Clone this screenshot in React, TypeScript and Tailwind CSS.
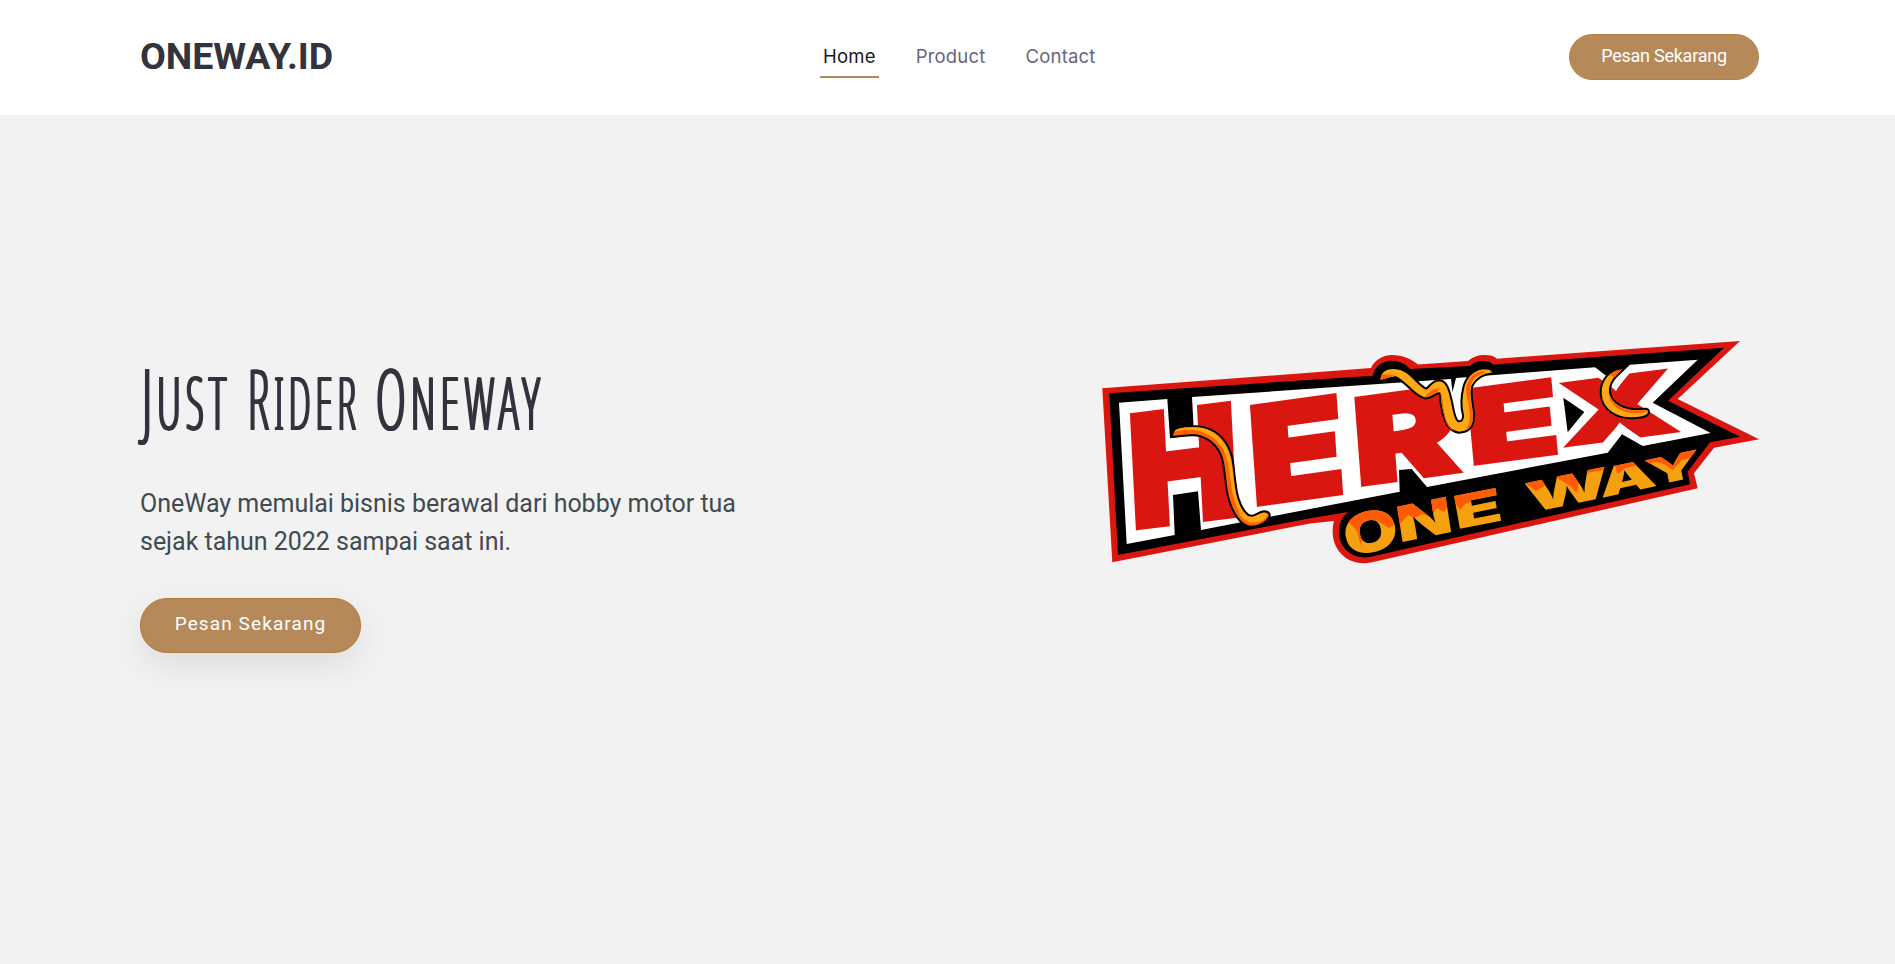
import { useMemo } from 'react';

type Pt = [number, number];

interface Glyph {
  char: string;
  // top-left, top-right, bottom-left, bottom-right
  quad: [Pt, Pt, Pt, Pt];
}

// cap height of the lettering face at font-size 100
const CAP = 72.7;

const HEREX: Glyph[] = [
  { char: 'H', quad: [[1129, 411], [1232, 403], [1135, 533], [1238, 515]] },
  { char: 'E', quad: [[1249, 403], [1338, 395], [1256, 509.3], [1345, 492.7]] },
  { char: 'R', quad: [[1352.7, 394.3], [1456, 386], [1360.7, 490], [1462, 470]] },
  { char: 'E', quad: [[1466, 386], [1552, 380], [1472.3, 469], [1560, 451.7]] },
  { char: 'X', quad: [[1556.7, 380], [1671, 371.3], [1565, 450.7], [1680, 429]] },
];

const ONE_WAY: Glyph[] = [
  { char: 'O', quad: [[1342, 517], [1392, 506], [1349, 557], [1399, 546]] },
  { char: 'N', quad: [[1396, 506.7], [1446.7, 496.7], [1402.7, 542.3], [1451, 531.7]] },
  { char: 'E', quad: [[1454, 495.7], [1495.7, 488.3], [1459, 529.3], [1502.3, 520]] },
  { char: 'W', quad: [[1524, 483.3], [1605, 466.7], [1531, 513], [1610, 496]] },
  { char: 'A', quad: [[1597, 470], [1651, 458], [1602.3, 497.7], [1657.3, 486]] },
  { char: 'Y', quad: [[1644, 460], [1697.3, 450], [1650, 487], [1702, 475]] },
];

function inkExtent(char: string): Pt {
  const ctx = document.createElement('canvas').getContext('2d');
  if (!ctx) return [6, 70];
  ctx.font = '900 100px Inter';
  const m = ctx.measureText(char);
  return [-m.actualBoundingBoxLeft, m.actualBoundingBoxRight];
}

function fit({ char, quad }: Glyph, stroke: number): string {
  const ink = inkExtent(char);
  const [tl, tr, bl, br] = quad;
  const w = ink[1] - ink[0] + stroke;
  const h = CAP + stroke;
  const a = (tr[0] - tl[0] + br[0] - bl[0]) / 2 / w;
  const b = (tr[1] - tl[1] + br[1] - bl[1]) / 2 / w;
  const c = (bl[0] - tl[0] + br[0] - tr[0]) / 2 / h;
  const d = (bl[1] - tl[1] + br[1] - tr[1]) / 2 / h;
  const cx = (tl[0] + tr[0] + bl[0] + br[0]) / 4;
  const cy = (tl[1] + tr[1] + bl[1] + br[1]) / 4;
  const mx = (ink[0] + ink[1]) / 2;
  const my = -CAP / 2;
  return `matrix(${a} ${b} ${c} ${d} ${cx - a * mx - c * my} ${cy - b * mx - d * my})`;
}

function letters(glyphs: Glyph[], stroke: number) {
  return glyphs.map((g, i) => (
    <text
      key={i}
      transform={fit(g, stroke)}
      fontSize="100"
      fontWeight="900"
      fontFamily="Inter, sans-serif"
      strokeWidth={stroke}
    >
      {g.char}
    </text>
  ));
}

function HerexLogo() {
  const herex = useMemo(() => letters(HEREX, 3.5), []);
  const oneWay = useMemo(() => letters(ONE_WAY, 0), []);
  return (
    <svg viewBox="1102 340 658 225" className="block h-[225px] w-[658px] shrink-0 overflow-visible">
      <defs>
        <clipPath id="one-way">{oneWay}</clipPath>
      </defs>
      <path
        fill="#d91710"
        d="M1102.3 388.3L1371 368C1375 359 1384 355 1392 355C1403 355 1411 359 1418 364.5L1468 361C1474 356 1479 355 1485 355C1490 355 1494 356 1497 358.7L1740 341L1677.7 399L1759 439.3L1714 447.7L1694 473.3L1697.7 488.3L1371 562.5C1349 567 1333 551 1332.7 533C1332.500 528 1333 525 1334 521L1310 523.500L1112.300 562.300Z"
      />
      <path
        d="M1109.300 393.300L1373 375.700C1374 367 1382 361 1391.700 360.700C1400 361 1406 364 1410 369L1470 366C1474 362 1478 361 1483 361C1488 361 1491 362 1493 364.500L1724 347.700L1668 400.700L1740 436.700L1710 442.300L1687.700 471.700L1690 484.300L1372 556.500C1353 561 1339 548 1339 532C1339 523 1342 517 1348 512L1310 518.300L1118 555Z"
      />
      <path
        fill="#fff"
        d="M1119 402.700L1167.300 399L1170 438.300L1194 435L1192 397L1451 379L1452.500 392L1456 378L1595 367.300L1613 381L1630 364.700L1697.700 359.700L1652.700 402.700L1710.700 433L1642.700 446L1622 434.300L1607.700 452.700L1427 487L1411.700 469L1399 470L1399.700 491.700L1201 530L1198 491.300L1173 495L1174.700 535L1126.700 544Z"
      />
      <path d="M1563.300 397.700L1584.300 412L1567.700 432.300Z" />
      <g fill="#d91710" stroke="#d91710">{herex}</g>

      <g fill="#f5a00f">{oneWay}</g>
      <path
        clipPath="url(#one-way)"
        fill="#ff5a05"
        d="M1340 500L1340 528L1350 523L1357 531L1361 546L1364 526L1376 520L1389 528L1397 522L1400 524L1408 515L1414 518L1422 514L1430 517L1437 508L1444 512L1453 500L1460 510L1465 504L1480 499L1497 494L1520 480L1536 491L1557 478L1570 486L1577 493L1580 474L1604 470L1615 466L1618 474L1625 468L1645 464L1656 462L1664 464L1673 470L1682 460L1700 456L1700 440L1340 490Z"
      />

      <g transform="translate(1090 330) scale(.33333)" strokeLinejoin="round">
        <path
          fill="#ff5f05"
          stroke="#000"
          strokeWidth="6"
          d="M246 320C246 298 264 290 300 289C352 286 390 306 413 347C432 382 430 413 436 455C440 495 452 535 473 553C490 566 502 545 522 544C538 544 543 554 536 564C524 582 503 590 480 590C452 586 430 551 418 513C404 472 407 426 396 385C385 347 353 320 314 316C288 314 265 321 246 320Z"
        />
        <path
          fill="#ffa815"
          d="M252 305C260 293 285 292 312 292C353 290 388 313 409 350C427 383 426 415 432 457C436 497 448 538 471 557C492 568 506 547 524 548C539 552 528 567 514 573C495 581 473 580 457 563C447 552 450 554 445 541C430 505 424 477 420 438C414 385 404 354 374 327C344 300 294 292 252 305Z"
        />
      </g>
      <g transform="translate(1310 330) scale(.33333)" strokeLinejoin="round">
        <path
          fill="#ffa815"
          stroke="#000"
          strokeWidth="6"
          d="M208 153C208 123 228 113 254 114C299 116 315 158 348 176C357 172 366 151 389 151C409 152 417 177 424 207C431 235 433 267 444 273C454 276 460 269 459 256C452 230 453 199 461 168C472 133 497 115 526 115C543 116 552 123 548 130C521 133 500 142 487 168C479 195 492 228 492 257C492 290 479 307 446 308C413 302 403 275 394 232C388 208 394 189 387 190C371 192 363 207 344 205C314 200 290 156 255 141C242 136 224 151 208 153Z"
        />
        <path fill="#ff5f05" d="M210 149L219 132L247 136L256 140C235 141 226 149 210 149Z" />
        <path fill="#ff5f05" d="M344 201C354 190 370 172 389 176L382 186C366 188 360 204 344 201ZM389 185C401 201 399 240 407 264C412 286 427 299 436 303C412 299 405 273 397 230C392 208 394 197 389 185Z" />
        <path fill="#ff5f05" d="M489 260C488 230 475 199 482 168C488 143 501 135 528 127L516 122C491 128 473 145 469 174C466 197 480 220 480 259C479 281 475 288 468 299C486 291 489 276 489 260Z" />
      </g>
      <g transform="translate(1540 330) scale(.33333)" strokeLinejoin="round">
        <path
          fill="#ffa815"
          stroke="#000"
          strokeWidth="6"
          d="M252 115C207 117 181 151 182 190C184 238 229 271 291 264C316 263 331 253 326 241C322 233 310 237 286 238C236 234 207 208 210 175C213 151 233 135 252 115Z"
        />
        <path
          fill="#ff5f05"
          d="M247 118C229 120 216 127 207 136L225 141ZM207 184C205 209 235 240 288 242L321 240C320 249 296 250 282 250C234 248 202 217 207 184Z"
        />
      </g>
    </svg>
  );
}

export default function App() {
  return (
    <div className="flex h-[964px] flex-col overflow-hidden bg-[#f2f2f2] font-['Roboto',sans-serif]">
      <header className="flex h-[115px] shrink-0 items-center bg-white pr-[136px] pb-[2px] pl-[140px]">
        <div className="w-[680px] text-[37.5px] font-bold tracking-[-0.05px] text-[#32333c]">ONEWAY.ID</div>
        <nav className="flex gap-[34px] font-['Inter',sans-serif] text-[18.5px] tracking-[0.2px] text-[#66657f]">
          <a className="border-b-2 border-[#b5895a] px-[3px] pt-[8px] pb-[5px] text-[#15161f]">Home</a>
          <a className="px-[3px] pt-[8px] pb-[7px]">Product</a>
          <a className="px-[3px] pt-[8px] pb-[7px]">Contact</a>
        </nav>
        <button className="ml-auto h-[46px] w-[190px] rounded-full border border-[#b5833f] bg-[#b5895a] pb-[2px] text-[18px] tracking-[-0.25px] text-white">
          Pesan Sekarang
        </button>
      </header>

      <main className="flex flex-1 items-start justify-between pr-[135px] pl-[140px]">
        <div className="w-[620px] pt-[222px]">
          <h1 className="flex h-[120px] font-['Noto_Sans',sans-serif] text-[74px] leading-[120px] font-light text-[#32333c] [text-shadow:5px_0_#32333c,3px_0_#32333c,2px_0_#32333c]">
            <span className="w-[107px] origin-left scale-x-[.44] pl-[3px] tracking-[12px] whitespace-pre uppercase first-letter:text-[85px]">Just </span>
            <span className="w-[128px] origin-left scale-x-[.415] tracking-[12px] whitespace-pre uppercase first-letter:text-[85px]">Rider </span>
            <span className="w-[170px] origin-left scale-x-[.45] tracking-[12px] whitespace-pre uppercase first-letter:text-[85px]">Oneway</span>
          </h1>
          <p className="mt-[28px] text-[25px] leading-[38px] tracking-[-0.02px] text-[#414a4f]">
            OneWay memulai bisnis berawal dari hobby motor tua
            <br />
            sejak tahun 2022 sampai saat ini.
          </p>
          <button className="mt-[37px] h-[55px] w-[221px] rounded-[27px] border border-[#b07a38] bg-[#b5895a] pb-[3px] text-[19px] tracking-[1.1px] text-white shadow-[0_12px_35px_rgba(0,0,0,0.09)]">
            Pesan Sekarang
          </button>
        </div>
        <div className="pt-[225px]">
          <HerexLogo />
        </div>
      </main>
    </div>
  );
}
